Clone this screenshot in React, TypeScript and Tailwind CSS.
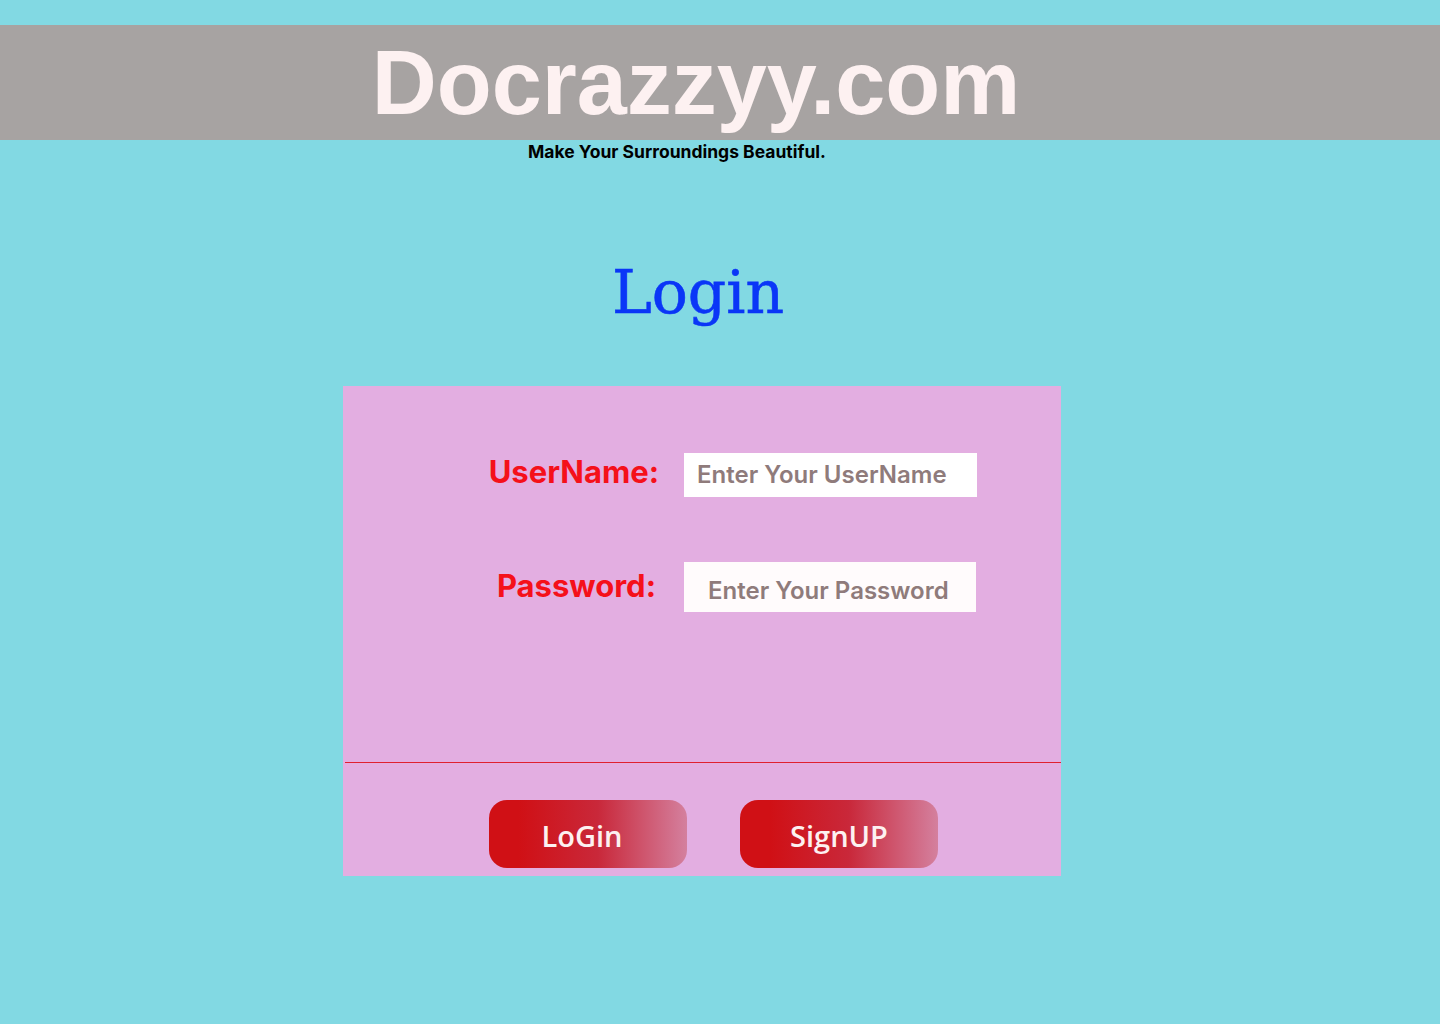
export default function App() {
  return (
    <div className="min-h-[1024px] w-full bg-[#82d9e3] pt-[25px] font-['Inter','Liberation_Sans',sans-serif]">
      <header className="flex h-[115px] items-center justify-center bg-[#a7a3a2] pr-[48px]">
        <h1 className="font-['Liberation_Sans',Arial,sans-serif] text-[90px] font-bold leading-none text-[#fdf1f1]">
          Docrazzyy.com
        </h1>
      </header>
      <p className="mt-[1px] pr-[86px] text-center text-[17.5px] font-bold leading-[22px] text-black">
        Make Your Surroundings Beautiful.
      </p>

      <h2 className="mt-[94px] pr-[44px] text-center font-['DejaVu_Serif',serif] text-[60px] leading-[70px] text-[#0a36f7] [-webkit-text-stroke:0.6px_#0a36f7]">
        Login
      </h2>

      <form className="ml-[343px] mt-[59px] flex h-[490px] w-[718px] flex-col bg-[#e3aee1]">
        <div className="mt-[63px] flex items-center">
          <label className="w-[316px] pb-[5px] text-right text-[31px] font-bold text-[#f5101a]">
            UserName:
          </label>
          <input
            type="text"
            placeholder="Enter Your UserName"
            className="ml-[25px] h-[44px] w-[293px] bg-white pl-[13px] text-[24px] font-semibold outline-none placeholder:text-[#8f7b7b]"
          />
        </div>
        <div className="mt-[61px] flex items-center">
          <label className="w-[313px] text-right text-[31px] font-bold text-[#f5101a]">
            Password:
          </label>
          <input
            type="password"
            placeholder="Enter Your Password"
            className="ml-[28px] h-[50px] w-[292px] bg-[#fffbfc] pl-[24px] pt-[8px] text-[24px] font-semibold outline-none placeholder:text-[#8f7b7b]"
          />
        </div>

        <div className="ml-[2px] mt-[150px] h-px bg-[#e0202f]" />

        <div className="ml-[146px] mt-[37px] flex gap-[53px]">
          <button
            type="button"
            className="h-[68px] w-[198px] rounded-[18px] bg-[linear-gradient(to_right,#d01015_15%,#c9283a_55%,#d4809e_100%)] pr-[12px] pt-[4px] font-['Open_Sans',sans-serif] text-[29px] font-semibold text-[#fdf1f1]"
          >
            LoGin
          </button>
          <button
            type="button"
            className="h-[68px] w-[198px] rounded-[18px] bg-[linear-gradient(to_right,#d01015_15%,#c9283a_55%,#d4809e_100%)] pt-[4px] font-['Open_Sans',sans-serif] text-[29px] font-semibold text-[#fdf1f1]"
          >
            SignUP
          </button>
        </div>
      </form>
    </div>
  );
}
